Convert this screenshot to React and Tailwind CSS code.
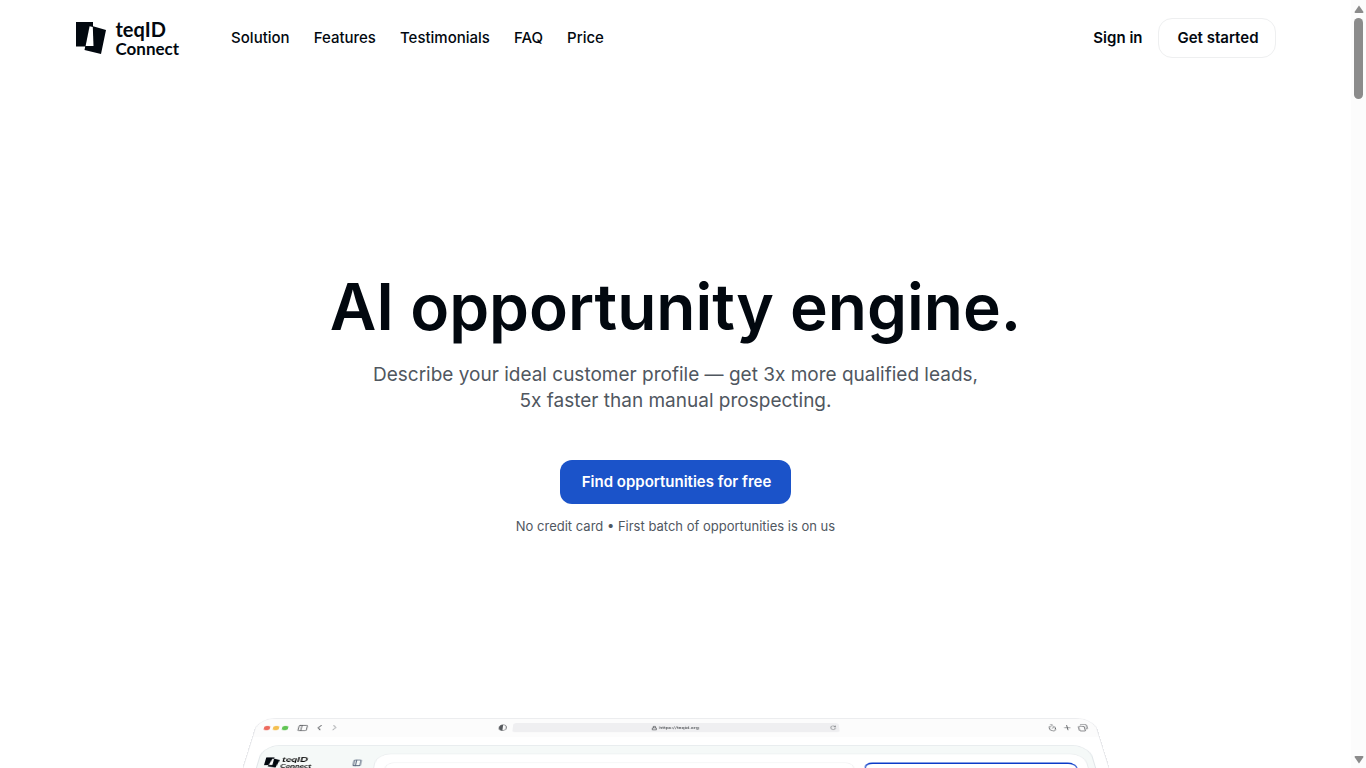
import { ChevronLeft, ChevronRight, Copy, Lock, Plus, RotateCw, Timer, PanelLeft } from 'lucide-react';

const navLinks = ['Solution', 'Features', 'Testimonials', 'FAQ', 'Price'];

function LogoMark({ className }) {
    return (
        <svg viewBox="0 0 30 32" className={className} fill="none" aria-hidden="true">
            <path d="M0 0H17V4.2L30 8L25 32L8.5 28L9.2 24.5H0Z" fill="#02080f" />
            <path d="M13.6 4.2L16.8 5L17.5 24H9.6Z" fill="white" />
        </svg>
    );
}

function Header() {
    return (
        <header className="w-full max-w-[1200px] mx-auto h-19 flex items-center justify-between">
            <div className="flex items-center">
                <a href="#" className="flex items-center gap-[10px] text-[#02080f]">
                    <LogoMark className="w-[30px] h-8" />
                    <span className="flex flex-col pt-px font-['Lato',sans-serif] font-bold">
                        <span className="text-[20px] leading-[19px]">teqID</span>
                        <span className="text-[17px] leading-[19px]">Connect</span>
                    </span>
                </a>
                <nav className="flex gap-6 ml-[52px] text-[15px] font-medium">
                    {navLinks.map((link) => (
                        <a key={link} href={`#${link.toLowerCase()}`}>{link}</a>
                    ))}
                </nav>
            </div>
            <div className="flex items-center gap-4">
                <a href="#signin" className="text-[15px] font-semibold">Sign in</a>
                <button type="button" className="h-10 pl-[18px] pr-4 border border-[#eeeff0] rounded-[14px] text-[15px] font-semibold">
                    Get started
                </button>
            </div>
        </header>
    );
}

function Hero() {
    return (
        <section className="flex flex-col items-center text-center pt-[195px]">
            <h1 className="text-[64px] leading-[72px] font-semibold">AI opportunity engine.</h1>
            <p className="mt-[19px] text-[19px] leading-[26px] text-[#50575f]">
                Describe your ideal customer profile — get 3x more qualified leads,
                <br />
                5x faster than manual prospecting.
            </p>
            <button type="button" className="mt-[46px] h-11 pl-[22px] pr-5 rounded-xl bg-[#1b53c9] text-white text-[15px] font-semibold">
                Find opportunities for free
            </button>
            <p className="mt-3 text-[13px] leading-5 text-[#50575f]">
                No credit card • First batch of opportunities is on us
            </p>
        </section>
    );
}

// Browser window leaning away from the viewer
function BrowserPreview() {
    return (
        <div className="w-[836px] mx-auto mt-[182px] origin-top [transform:perspective(1596px)_rotateX(50deg)] rounded-t-[18px] border border-[#e6e7ea] bg-white">
            <div className="h-7 px-2 flex items-center justify-between rounded-t-[18px] bg-[#fcfcfc] text-[#55585c]">
                <div className="flex-1 flex items-center">
                    <div className="flex gap-[3px]">
                        <span className="w-[6px] h-[7px] rounded-full bg-[#ed6a5e]" />
                        <span className="w-[6px] h-[7px] rounded-full bg-[#f4bf4f]" />
                        <span className="w-[6px] h-[7px] rounded-full bg-[#61c554]" />
                    </div>
                    <PanelLeft className="ml-[9px] w-[11px] h-[11px]" strokeWidth={2} />
                    <ChevronLeft className="ml-[6px] w-[10px] h-[14px]" strokeWidth={2} preserveAspectRatio="none" />
                    <ChevronRight className="ml-[5px] w-[10px] h-[14px] text-[#a5a7aa]" strokeWidth={2} preserveAspectRatio="none" />
                </div>
                <div className="mr-[14px] flex items-center gap-[6px]">
                    <svg viewBox="0 0 16 16" className="w-[8px] h-[10px]" preserveAspectRatio="none" aria-hidden="true">
                        <circle cx="8" cy="8" r="7" fill="none" stroke="currentColor" strokeWidth="1.5" />
                        <path d="M8 1A7 7 0 0 0 8 15Z" fill="currentColor" />
                    </svg>
                    <div className="w-[324px] h-[14px] rounded-[3px] bg-[#efeff1] flex items-center">
                        <span className="flex-1 flex items-center justify-center gap-[2px] pl-2 text-[5px] leading-none font-semibold">
                            <Lock className="w-[5px] h-[7px]" strokeWidth={4} preserveAspectRatio="none" />
                            https://teqid.org
                        </span>
                        <RotateCw className="w-[6px] h-2 mr-[3px]" strokeWidth={2} preserveAspectRatio="none" />
                    </div>
                </div>
                <div className="flex-1 flex items-center justify-end gap-[6px]">
                    <Timer className="w-[9px] h-3" strokeWidth={2} preserveAspectRatio="none" />
                    <Plus className="w-[9px] h-3" strokeWidth={2} preserveAspectRatio="none" />
                    <Copy className="w-[10px] h-3 -scale-x-100" strokeWidth={2} preserveAspectRatio="none" />
                </div>
            </div>
            <div className="mt-3 mx-3 h-[520px] flex rounded-[18px] border border-[#e0e5e8] bg-[#f5f9f8]">
                <div className="w-[112px] pl-[6px] pr-3 pt-[15px] flex items-start justify-between">
                    <div className="flex items-center gap-[2px] text-black">
                        <LogoMark className="w-[14px] h-[20px]" />
                        <span className="flex flex-col font-['Lato',sans-serif] font-bold">
                            <span className="text-[10px] leading-[10px]">teqID</span>
                            <span className="text-[8px] leading-[10px]">Connect</span>
                        </span>
                    </div>
                    <PanelLeft className="mt-[5px] w-[9px] h-[11px] text-[#5d6b80]" strokeWidth={3} preserveAspectRatio="none" />
                </div>
                <div className="flex-1 mt-3 mr-[6px] py-3 px-[10px] flex gap-[10px] rounded-[14px] border border-[#e9ecee] bg-white">
                    <div className="flex-1 rounded-[8px] border border-[#f0f1f2] pt-2 px-2">
                        <div className="ml-auto w-[100px] h-5 rounded border border-[#f0f1f2]" />
                    </div>
                    <div className="w-[205px] rounded-[8px] border-x border-t-2 border-[#0b3bc8]" />
                </div>
            </div>
        </div>
    );
}

function ScrollRail() {
    return (
        <div className="w-[15px] shrink-0 h-full flex flex-col items-center justify-between bg-[#fcfcfc] text-[#8b8b8b]" aria-hidden="true">
            <div className="flex flex-col items-center pt-[5px] gap-[5px]">
                <svg viewBox="0 0 10 8" className="w-[10px] h-2"><path d="M5 0.5L9.5 7Q9.5 8 8.5 8H1.5Q0.5 8 0.5 7Z" fill="currentColor" /></svg>
                <div className="w-[9px] h-[81px] rounded-full bg-[#8b8b8b]" />
            </div>
            <svg viewBox="0 0 10 8" className="w-[10px] h-2 mb-1"><path d="M5 7.5L9.5 1Q9.5 0 8.5 0H1.5Q0.5 0 0.5 1Z" fill="currentColor" /></svg>
        </div>
    );
}

function App() {
    return (
        <div className="h-screen flex overflow-hidden bg-white text-[#02080f] font-['Inter',sans-serif]">
            <main className="flex-1 min-w-0 overflow-hidden">
                <Header />
                <Hero />
                <BrowserPreview />
            </main>
            <ScrollRail />
        </div>
    );
}

export default App;
